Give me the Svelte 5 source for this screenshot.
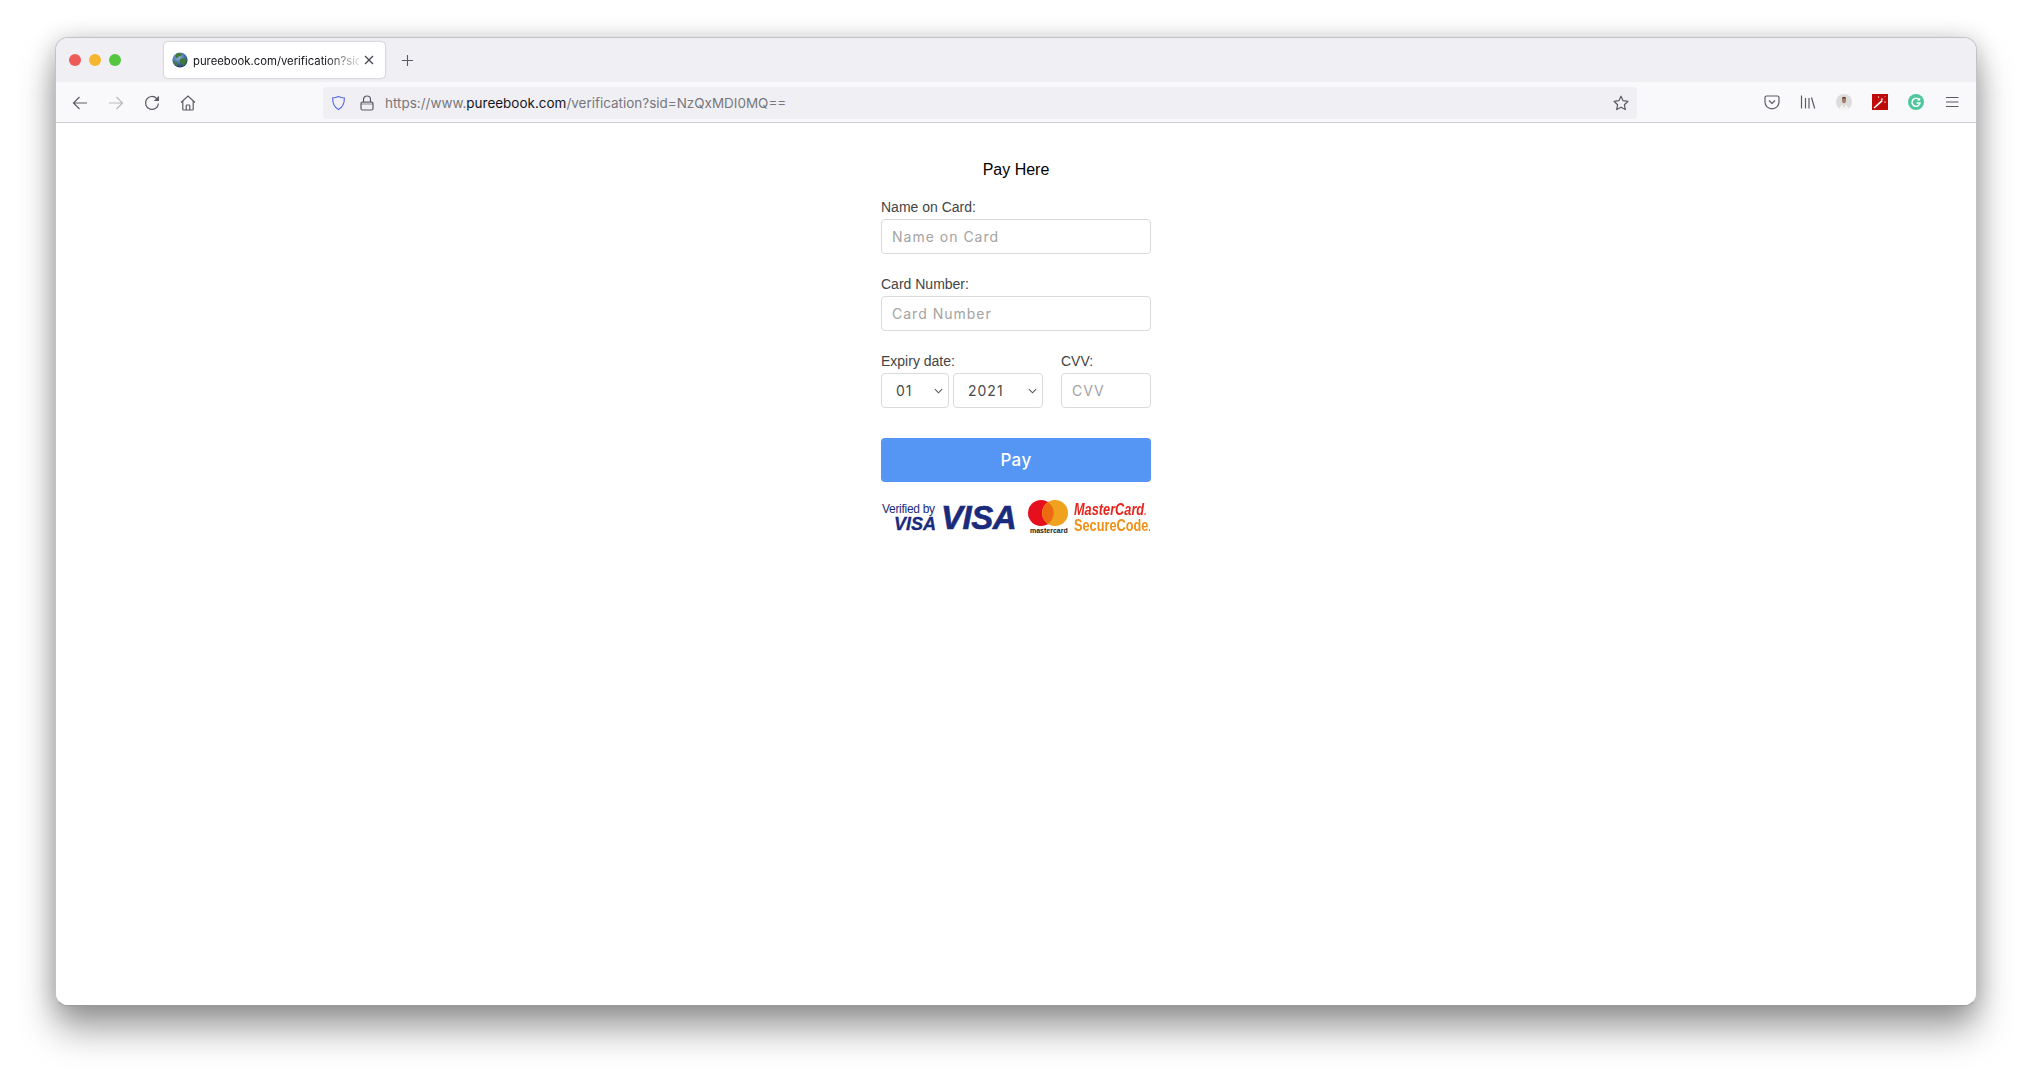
<script>
  const months = ['01','02','03','04','05','06','07','08','09','10','11','12'];
  const years = ['2021','2022','2023','2024','2025'];
</script>

<div class="desktop">
<div class="window">
  <div class="tabbar">
    <div class="lights">
      <span class="light red"></span>
      <span class="light yellow"></span>
      <span class="light green"></span>
    </div>
    <div class="tab">
      <svg class="favicon" viewBox="0 0 16 16">
        <defs>
          <radialGradient id="globe" cx="40%" cy="30%" r="75%">
            <stop offset="0" stop-color="#9bb8e0" />
            <stop offset="0.6" stop-color="#3c6aa6" />
            <stop offset="1" stop-color="#1c3350" />
          </radialGradient>
        </defs>
        <circle cx="8" cy="8" r="7.6" fill="url(#globe)" />
        <path d="M5 1.500c2-.6 4-.4 5 .8L8.600 4.500 7 4l-1 2-2.500-.5C3 4 3.800 2.200 5 1.500z" fill="#3f7a34" />
        <path d="M8 7l4-1 2.500 2c0 2.500-1.500 5-3.500 6l-1-2-2-1.500z" fill="#3f7a34" />
        <path d="M2 9l2.500 1 1 3 -1 .8C3 13 2 11 2 9z" fill="#4c7d3d" />
      </svg>
      <span class="tab-title">pureebook.com/verification?sid=</span>
      <svg class="tab-close" viewBox="0 0 12 12"><path d="M2 2l8 8M10 2l-8 8" /></svg>
    </div>
    <svg class="new-tab" viewBox="0 0 14 14"><path d="M7 1v12M1 7h12" /></svg>
  </div>

  <div class="navbar">
    <div class="nav-btn">
      <svg class="ico" viewBox="0 0 16 16"><path d="M15 8H1.500M7.500 2l-6 6 6 6" /></svg>
    </div>
    <div class="nav-btn dim">
      <svg class="ico" viewBox="0 0 16 16"><path d="M1 8h13.500M8.500 2l6 6-6 6" /></svg>
    </div>
    <div class="nav-btn">
      <svg class="ico" viewBox="0 0 16 16"><path d="M14.500 8.500a6.500 6.500 0 1 1-2-5.300L14.500 5" /><path class="fill" d="M15 .8V6H9.800z" /></svg>
    </div>
    <div class="nav-btn">
      <svg class="ico" viewBox="0 0 16 16"><path d="M1 7.500L8 1l7 6.500M2.800 6v8.300a.7.7 0 0 0 .7.7h9a.7.7 0 0 0 .7-.7V6M6.200 15v-4.300a.7.7 0 0 1 .7-.7h2.200a.7.7 0 0 1 .7.7V15" /></svg>
    </div>

    <div class="urlbar">
      <svg class="shield" viewBox="0 0 16 16"><path d="M8 1c2 1 4 1.500 6.300 1.700C14.300 9 12 13 8 15 4 13 1.700 9 1.700 2.700 4 2.500 6 2 8 1z" /></svg>
      <svg class="lock" viewBox="0 0 14 16"><rect x="1" y="7" width="12" height="8" rx="1.500" /><path d="M3.500 7V4.500a3.500 3.500 0 0 1 7 0V7" /><rect x="1" y="7" width="12" height="3" fill="#5b5b66" stroke="none" opacity=".35" /></svg>
      <div class="url"><span class="g">https://www.</span><span class="d">pureebook.com</span><span class="g">/verification?sid=NzQxMDI0MQ==</span></div>
      <svg class="star" viewBox="0 0 16 16"><path d="M8 1.200l2.100 4.500 4.900.6-3.600 3.400.9 4.900L8 12.200l-4.300 2.400.9-4.900L1 6.300l4.900-.6z" /></svg>
    </div>

    <div class="nav-btn tool">
      <svg class="ico" viewBox="0 0 16 16"><path d="M2.500 2h11A1.500 1.500 0 0 1 15 3.500V8a7 6.800 0 0 1-14 0V3.500A1.500 1.500 0 0 1 2.500 2z" /><path d="M5 6.500L8 9.500l3-3" /></svg>
    </div>
    <div class="nav-btn tool">
      <svg class="ico" viewBox="0 0 16 16"><path d="M1.500 1.500v13M5.500 4v10.500M9 4v10.500M11.500 3.500l3.200 11" /></svg>
    </div>
    <div class="nav-btn tool">
      <svg class="ext" viewBox="0 0 16 16">
        <circle cx="8" cy="8" r="8" fill="#dcdcdc" />
        <path d="M3.500 16c.3-3.800 2-5.200 4.500-5.200s4.200 1.400 4.500 5.200z" fill="#f3f3f3" />
        <ellipse cx="8" cy="6" rx="2" ry="3.200" fill="#a87c66" />
        <path d="M5.900 4.800C5.900 2.400 10.100 2.400 10.100 4.800 9 4 7 4 5.900 4.800z" fill="#4d3a32" />
        <path d="M7.600 11l.4 3 .4-3z" fill="#b98a4a" />
      </svg>
    </div>
    <div class="nav-btn tool">
      <svg class="ext" viewBox="0 0 16 16">
        <rect width="16" height="16" fill="#c00a0a" />
        <path d="M2.500 14.500l-1-1L9.500 6l1.300 1.300z" fill="#fff" />
        <path d="M10 3.500l.4 1.300 1.300.4-1.300.4-.4 1.300-.4-1.300-1.300-.4 1.300-.4zM13 7l.3.8.8.3-.8.3-.3.8-.3-.8-.8-.3.8-.3zM6.500 2l.3.800.8.3-.8.3-.3.8-.3-.8-.8-.3.8-.3zM13 1.800l.2.600.6.2-.6.2-.2.600-.2-.6-.6-.2.6-.2z" fill="#fff" />
      </svg>
    </div>
    <div class="nav-btn tool">
      <svg class="ext" viewBox="0 0 16 16">
        <circle cx="8" cy="8" r="8" fill="#4fc79c" />
        <path d="M11.300 6A4 4 0 1 0 12 9H8.500" fill="none" stroke="#fff" stroke-width="1.500" />
        <path d="M12.200 3.500v3h-3z" fill="#fff" />
      </svg>
    </div>
    <div class="nav-btn tool">
      <svg class="ico" viewBox="0 0 16 16"><path d="M2 3.500h12.500M2 8h12.500M2 12.500h12.500" /></svg>
    </div>
  </div>

  <main class="page">
    <form class="form">
      <h1 class="title">Pay Here</h1>

      <div class="field">
        <label for="name">Name on Card:</label>
        <input id="name" placeholder="Name on Card" />
      </div>

      <div class="field">
        <label for="number">Card Number:</label>
        <input id="number" placeholder="Card Number" />
      </div>

      <div class="row">
        <div class="expiry">
          <label for="month">Expiry date:</label>
          <div class="selects">
            <div class="select month">
              <select id="month">
                {#each months as m}<option>{m}</option>{/each}
              </select>
              <svg viewBox="0 0 10 6"><path d="M1 1l4 4 4-4" /></svg>
            </div>
            <div class="select year">
              <select aria-label="Expiry year">
                {#each years as y}<option>{y}</option>{/each}
              </select>
              <svg viewBox="0 0 10 6"><path d="M1 1l4 4 4-4" /></svg>
            </div>
          </div>
        </div>
        <div class="cvv">
          <label for="cvv">CVV:</label>
          <input id="cvv" placeholder="CVV" />
        </div>
      </div>

      <button type="button" class="pay">Pay</button>

      <div class="logos">
        <div class="verified">
          <span class="vby">Verified by</span>
          <span class="vvisa">VISA</span>
        </div>
        <span class="visa">VISA</span>
        <div class="mc">
          <svg viewBox="0 0 40 26">
            <circle cx="13" cy="13" r="13" fill="#e60f1e" />
            <circle cx="27" cy="13" r="13" fill="#f0a11e" />
            <path d="M20 2.200a13 13 0 0 1 0 21.600 13 13 0 0 1 0-21.600z" fill="#ee6a12" />
          </svg>
          <span>mastercard</span>
        </div>
        <div class="secure">
          <span class="mct">MasterCard<small>.</small></span>
          <span class="sct">SecureCode<small>.</small></span>
        </div>
      </div>
    </form>
  </main>
</div>
</div>

<style>
  :global(html) {
    background: #fff;
  }
  :global(body) {
    margin: 0;
    background: #fff;
    overflow: hidden;
  }

  .desktop {
    box-sizing: border-box;
    height: 1079px;
    padding: 37px 55px 73px;
    background: #fff;
    overflow: hidden;
  }

  .window {
    box-sizing: border-box;
    width: 1922px;
    height: 969px;
    border: 1px solid #c2c2c4;
    border-bottom-color: #9a9a9a;
    border-radius: 13px;
    background: #fff;
    overflow: hidden;
    box-shadow: 0 24px 36px rgba(0, 0, 0, 0.36), 0 2px 24px rgba(0, 0, 0, 0.2);
    display: flex;
    flex-direction: column;
    font-family: Inter, "Liberation Sans", sans-serif;
    isolation: isolate;
  }

  .tabbar {
    height: 44px;
    flex: none;
    background: #f0f0f4;
    display: flex;
    align-items: center;
    box-sizing: border-box;
    padding-left: 13px;
  }
  .lights {
    display: flex;
    gap: 8px;
    width: 95px;
  }
  .light {
    width: 12px;
    height: 12px;
    border-radius: 50%;
  }
  .red { background: #ee5a56; }
  .yellow { background: #f5b62f; }
  .green { background: #55c63f; }

  .tab {
    width: 221px;
    height: 36px;
    box-sizing: border-box;
    background: #fff;
    border-radius: 4px;
    box-shadow: 0 0 2px rgba(0, 0, 0, 0.35);
    display: flex;
    align-items: center;
    padding: 0 10px 0 8px;
  }
  .favicon {
    width: 16px;
    height: 16px;
    flex: none;
    margin-right: 5px;
  }
  .tab-title {
    flex: 1;
    min-width: 0;
    white-space: nowrap;
    font-size: 11.3px;
    color: #15141a;
    padding-top: 1px;
    -webkit-mask-image: linear-gradient(to right, #000 80%, rgba(0, 0, 0, 0.15));
    mask-image: linear-gradient(to right, #000 80%, rgba(0, 0, 0, 0.15));
  }
  .tab-close {
    width: 12px;
    height: 12px;
    flex: none;
    margin-left: 4px;
    margin-top: -1px;
  }
  .tab-close path {
    stroke: #45454d;
    stroke-width: 1.3;
    fill: none;
  }
  .new-tab {
    width: 13px;
    height: 13px;
    margin-left: 16px;
  }
  .new-tab path {
    stroke: #5b5b66;
    stroke-width: 1.2;
    fill: none;
  }

  .navbar {
    height: 41px;
    flex: none;
    box-sizing: border-box;
    background: #f9f9fb;
    border-bottom: 1px solid #cfcfd8;
    display: flex;
    align-items: center;
    padding: 1px 6px 0 6px;
  }
  .nav-btn {
    width: 36px;
    height: 32px;
    flex: none;
    display: flex;
    align-items: center;
    justify-content: center;
  }
  .tool {
    margin-bottom: 2px;
  }
  .ico {
    width: 16px;
    height: 16px;
    fill: none;
    stroke: #5b5b66;
    stroke-width: 1.2;
  }
  .ico .fill {
    fill: #5b5b66;
    stroke: none;
  }
  .dim .ico { stroke: #b9b9be; }
  .ext {
    width: 16px;
    height: 16px;
    display: block;
  }

  .urlbar {
    flex: 1;
    min-width: 0;
    height: 32px;
    margin: 0 117px;
    background: #f0f0f4;
    border-radius: 4px;
    display: flex;
    align-items: center;
    padding: 0 8px 0 8px;
    box-sizing: border-box;
  }
  .shield {
    width: 15px;
    height: 16px;
    flex: none;
    fill: none;
    stroke: #5469e8;
    stroke-width: 1.2;
  }
  .lock {
    width: 14px;
    height: 16px;
    flex: none;
    margin-left: 14px;
    fill: none;
    stroke: #5b5b66;
    stroke-width: 1.2;
  }
  .url {
    flex: 1;
    margin-left: 11px;
    font-size: 13.48px;
    white-space: nowrap;
  }
  .g { color: #77777c; }
  .d { color: #15141a; }
  .star {
    width: 16px;
    height: 16px;
    flex: none;
    fill: none;
    stroke: #5b5b66;
    stroke-width: 1.2;
    stroke-linejoin: round;
  }

  .page {
    flex: 1;
    display: flex;
    justify-content: center;
    background: #fff;
  }
  .form {
    width: 270px;
    padding-top: 37px;
    box-sizing: content-box;
  }
  .title {
    margin: 0 0 19px;
    font: 400 16px/20px "Liberation Sans", Arial, sans-serif;
    color: #000;
    text-align: center;
  }
  label {
    display: block;
    margin-bottom: 4px;
    font: 400 14px/16px "Liberation Sans", Arial, sans-serif;
    color: #444;
  }
  .field {
    margin-bottom: 22px;
  }
  input,
  select {
    display: block;
    width: 100%;
    height: 35px;
    box-sizing: border-box;
    border: 1px solid #dadada;
    border-radius: 4px;
    background: #fff;
    font: 400 14px Inter, sans-serif;
    letter-spacing: 1px;
    color: #4a4a4a;
    outline: none;
    margin: 0;
  }
  input {
    padding: 0 10px;
  }
  input::placeholder {
    color: #a3a3a3;
    opacity: 1;
  }
  select {
    appearance: none;
    -webkit-appearance: none;
    padding: 0 0 0 14px;
  }
  .row {
    display: flex;
    justify-content: space-between;
  }
  .expiry { width: 162px; }
  .cvv { width: 90px; }
  .selects {
    display: flex;
    gap: 4px;
  }
  .select {
    position: relative;
  }
  .month { width: 68px; }
  .year { width: 90px; }
  .select svg {
    position: absolute;
    right: 6px;
    top: 15px;
    width: 9px;
    height: 6px;
    fill: none;
    stroke: #555;
    stroke-width: 1.2;
    pointer-events: none;
  }

  .pay {
    display: block;
    width: 100%;
    height: 44px;
    margin-top: 30px;
    border: 0;
    border-radius: 4px;
    background: #5596f5;
    color: #fff;
    font: 500 17px Inter, sans-serif;
    letter-spacing: 0.4px;
  }

  .logos {
    height: 35px;
    margin-top: 18px;
    display: flex;
    align-items: flex-start;
    font-family: "Liberation Sans", Arial, sans-serif;
  }
  .verified {
    width: 59px;
    margin-left: 1px;
    display: flex;
    flex-direction: column;
    color: #1a2a7c;
    flex: none;
  }
  .vby {
    font-size: 12px;
    line-height: 13px;
    margin-top: 3px;
    letter-spacing: -0.3px;
    white-space: nowrap;
  }
  .vvisa {
    font-size: 18px;
    line-height: 16px;
    font-weight: 700;
    font-style: italic;
    text-align: right;
    padding-right: 5px;
    -webkit-text-stroke: 0.3px #1a2a7c;
  }
  .visa {
    flex: none;
    width: 87px;
    font-size: 33px;
    line-height: 35px;
    font-weight: 700;
    font-style: italic;
    color: #1a2a7c;
    letter-spacing: -0.5px;
    -webkit-text-stroke: 0.6px #1a2a7c;
  }
  .mc {
    width: 46px;
    flex: none;
    display: flex;
    flex-direction: column;
    align-items: flex-start;
  }
  .mc svg {
    width: 40px;
    height: 26px;
    display: block;
  }
  .mc span {
    font-size: 7px;
    line-height: 9px;
    font-weight: 700;
    color: #222;
    margin-left: 2px;
  }
  .secure {
    display: flex;
    flex-direction: column;
    font-size: 17px;
    font-weight: 700;
    line-height: 14px;
    white-space: nowrap;
    padding-top: 3px;
    flex: none;
  }
  .secure small { font-size: 10px; }
  .secure span {
    transform: scaleX(0.75);
    transform-origin: left center;
  }
  .mct {
    color: #e8251c;
    font-style: italic;
  }
  .sct {
    color: #f09014;
  }
</style>
